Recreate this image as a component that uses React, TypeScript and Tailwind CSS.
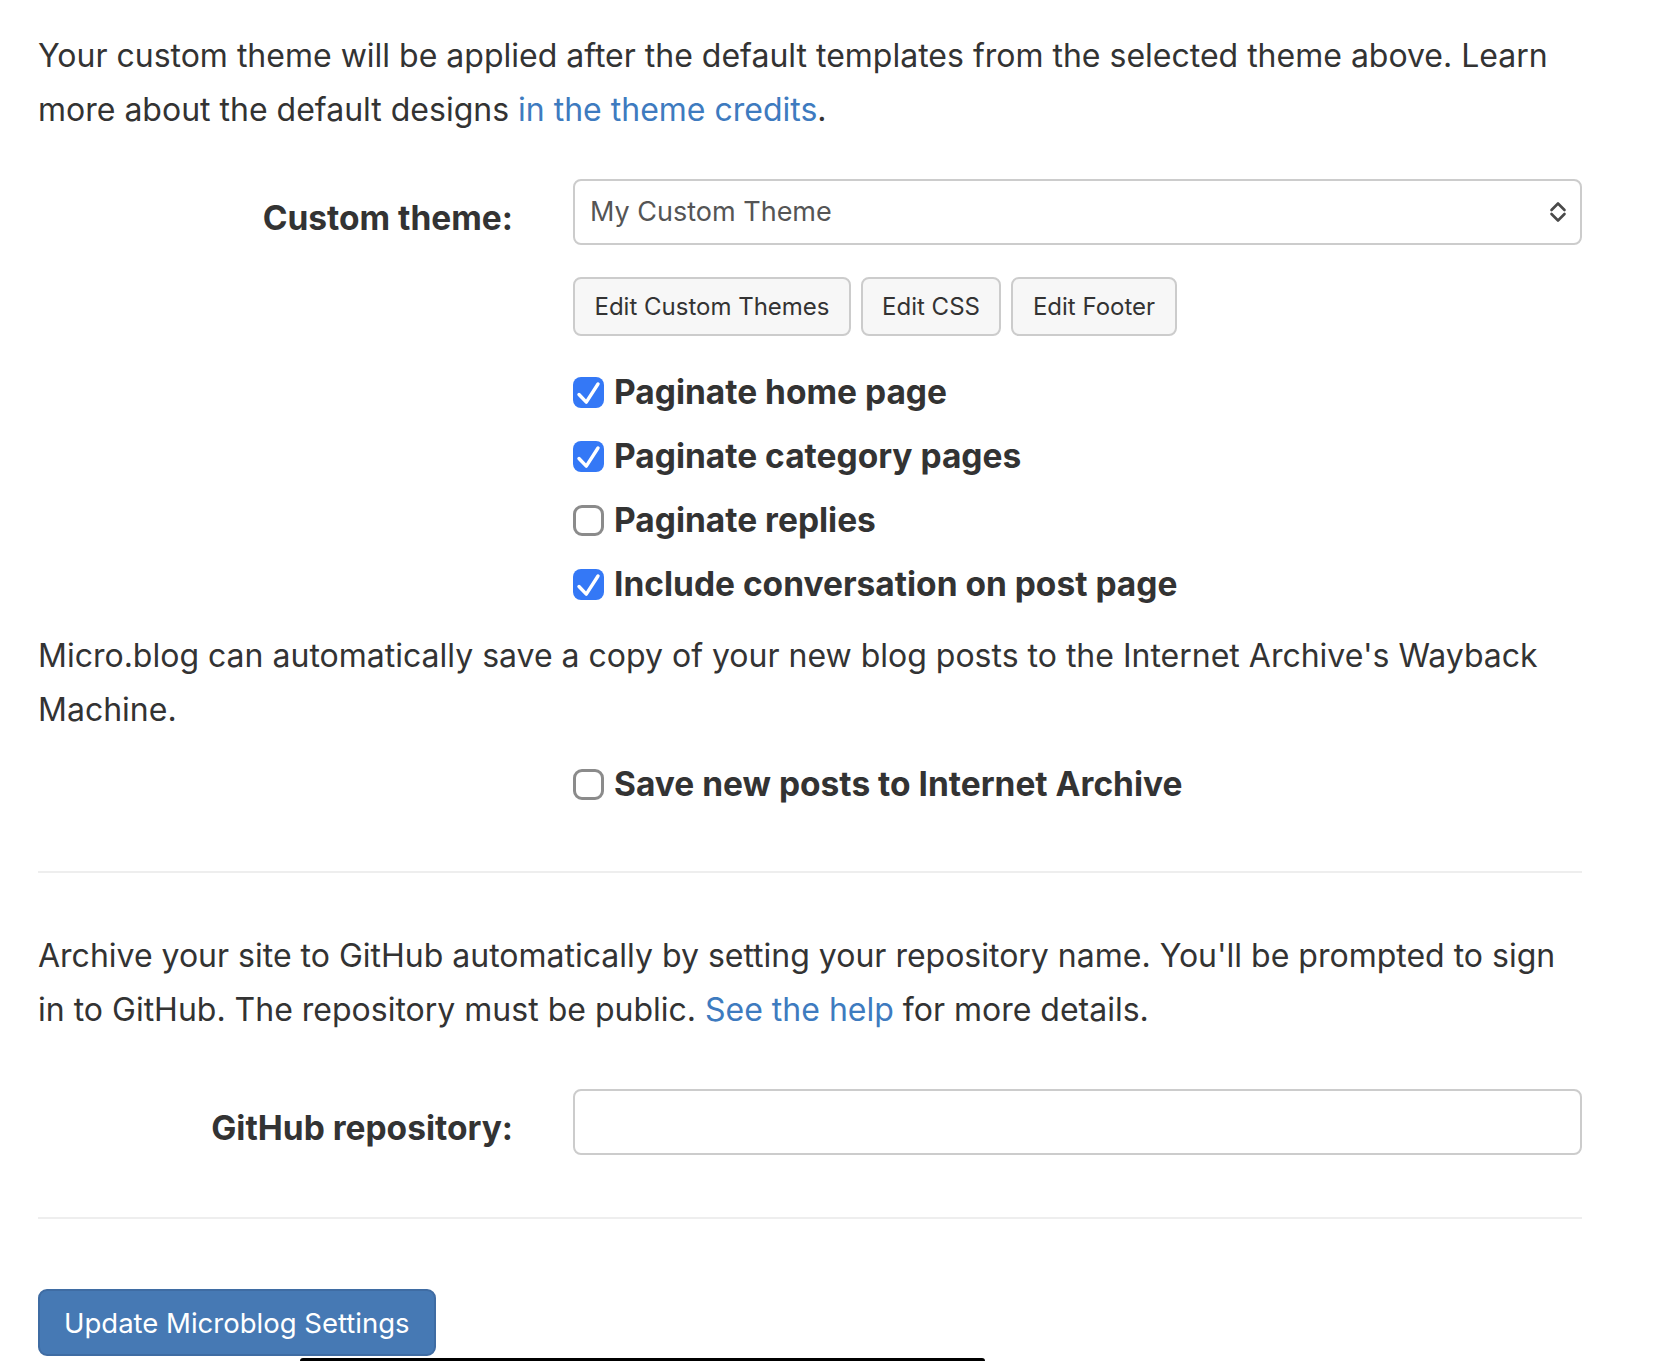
import { useState } from 'react';

function Check({ checked, label, onToggle }: { checked: boolean; label: string; onToggle: () => void }) {
  return (
    <label className="flex items-center h-[64px] cursor-pointer select-none" onClick={onToggle}>
      {checked ? (
        <span className="w-[31px] h-[31px] rounded-[8px] bg-[#3478f6] flex items-center justify-center shrink-0">
          <svg width="31" height="31" viewBox="0 0 31 31" fill="none">
            <path d="M6 17.5l7.3 7.6L25 7" stroke="white" strokeWidth="3.4" strokeLinecap="round" strokeLinejoin="round" />
          </svg>
        </span>
      ) : (
        <span className="w-[31px] h-[31px] rounded-[9px] border-[3px] border-[#8b8b8b] bg-white shrink-0" />
      )}
      <span className="ml-[10px] font-bold text-[33.5px]">{label}</span>
    </label>
  );
}

export default function App() {
  const [opts, setOpts] = useState({ home: true, category: true, replies: false, conversation: true, archive: false });
  const toggle = (k: keyof typeof opts) => setOpts(o => ({ ...o, [k]: !o[k] }));

  return (
    <div className="min-h-screen bg-white text-[#333] font-['Inter',sans-serif] text-[32px] leading-[54px] relative overflow-hidden">
      <div className="px-[38px] pt-[29px] w-[1620px]">
        <p className="w-[1544px]">
          Your custom theme will be applied after the default templates from the selected theme above. Learn more about the default designs{' '}
          <a href="#" className="text-[#3e7bbf]">in the theme credits</a>.
        </p>

        <div className="flex mt-[42px]">
          <div className="w-[535px] pr-[60px] text-right font-bold text-[33.5px] pt-[12px]">Custom theme:</div>
          <div className="w-[1009px]">
            <div className="h-[66px] border-2 border-[#cccccc] rounded-[8px] flex items-center justify-between pl-[15px] pr-[13px] text-[#555] text-[27px]">
              <span>My Custom Theme</span>
              <svg width="18" height="22" viewBox="0 0 18 22" fill="none">
                <path d="M2.5 9L9 2.5 15.5 9M2.5 13L9 19.5 15.5 13" stroke="#4a4a4a" strokeWidth="2.6" strokeLinecap="round" strokeLinejoin="round" />
              </svg>
            </div>
            <div className="flex gap-[10px] mt-[32px] text-[24px]">
              <button className="h-[59px] w-[278px] bg-[#f7f7f7] border-2 border-[#cccccc] rounded-[8px]">Edit Custom Themes</button>
              <button className="h-[59px] w-[140px] bg-[#f7f7f7] border-2 border-[#cccccc] rounded-[8px]">Edit CSS</button>
              <button className="h-[59px] w-[166px] bg-[#f7f7f7] border-2 border-[#cccccc] rounded-[8px]">Edit Footer</button>
            </div>
            <div className="mt-[24px]">
              <Check checked={opts.home} label="Paginate home page" onToggle={() => toggle('home')} />
              <Check checked={opts.category} label="Paginate category pages" onToggle={() => toggle('category')} />
              <Check checked={opts.replies} label="Paginate replies" onToggle={() => toggle('replies')} />
              <Check checked={opts.conversation} label="Include conversation on post page" onToggle={() => toggle('conversation')} />
            </div>
          </div>
        </div>

        <p className="mt-[13px] w-[1544px]">
          Micro.blog can automatically save a copy of your new blog posts to the Internet Archive's Wayback Machine.
        </p>
        <div className="ml-[535px] mt-[15px]">
          <Check checked={opts.archive} label="Save new posts to Internet Archive" onToggle={() => toggle('archive')} />
        </div>

        <hr className="mt-[55px] w-[1544px] border-0 h-[2px] bg-[#eeeeee]" />

        <p className="mt-[56px] w-[1544px]">
          Archive your site to GitHub automatically by setting your repository name. You'll be prompted to sign in to GitHub. The repository must be public.{' '}
          <a href="#" className="text-[#3e7bbf]">See the help</a> for more details.
        </p>

        <div className="flex mt-[52px]">
          <div className="w-[535px] pr-[60px] text-right font-bold text-[33.5px] pt-[12px]">GitHub repository:</div>
          <input type="text" className="w-[1009px] h-[66px] border-2 border-[#cccccc] rounded-[8px] px-[15px] outline-none" />
        </div>

        <hr className="mt-[62px] w-[1544px] border-0 h-[2px] bg-[#eeeeee]" />

        <button className="mt-[70px] h-[67px] px-[24px] bg-[#4679b4] border-2 border-[#3f6ca3] rounded-[9px] text-white text-[27.5px]">
          Update Microblog Settings
        </button>
      </div>
      <div className="absolute left-[300px] bottom-0 w-[685px] h-[3px] bg-black rounded-t-full" />
    </div>
  );
}
